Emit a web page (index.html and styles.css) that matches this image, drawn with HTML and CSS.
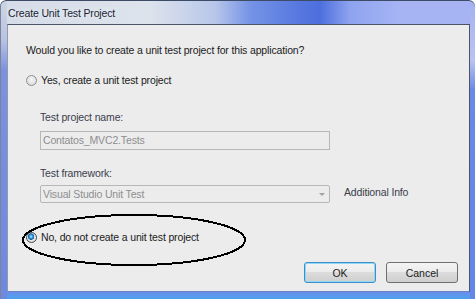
FILE: index.html
```html
<!DOCTYPE html>
<html lang="en">
<head>
    <meta charset="UTF-8">
    <meta name="viewport" content="width=device-width, initial-scale=1.0">
    <title>Create Unit Test Project</title>
    <link rel="stylesheet" href="styles.css">
</head>
<body>
    <div class="window">
        <div class="titlebar">Create Unit Test Project</div>
        <div class="client">
            <p class="question">Would you like to create a unit test project for this application?</p>
            <div class="option option-yes"><span class="radio"></span>Yes, create a unit test project</div>

            <div class="details">
                <div class="field-label first">Test project name:</div>
                <div class="textbox">Contatos_MVC2.Tests</div>
                <div class="field-label">Test framework:</div>
                <div class="combo-row">
                    <div class="combo"><span>Visual Studio Unit Test</span><span class="arrow"></span></div>
                    <span class="info">Additional Info</span>
                </div>
            </div>

            <div class="option option-no"><span class="radio checked"></span>No, do not create a unit test project</div>

            <div class="buttons">
                <button class="btn default">OK</button>
                <button class="btn">Cancel</button>
            </div>

            <!-- hand drawn marker around the chosen option -->
            <svg class="mark" width="226" height="54" viewBox="0 0 226 54">
                <ellipse cx="113" cy="27" rx="111" ry="25" fill="none" stroke="#000" stroke-width="2" shape-rendering="crispEdges"/>
            </svg>
        </div>
    </div>
</body>
</html>
```

FILE: styles.css
```css
body {
    margin: 0;
    font-family: "Liberation Sans", Arial, sans-serif;
    font-size: 10.5px;
    letter-spacing: -0.15px;
}
.window {
    width: 475px;
    height: 299px;
    box-sizing: border-box;
    padding: 0 5px 7px 7px;
    display: flex;
    flex-direction: column;
    border-radius: 6px 6px 0 0;
    box-shadow: inset 0 1px 0 #3d4c66, inset 1px 0 0 #7c8598;
    background:
        linear-gradient(to bottom, #cdd5e3 0, #b8c3e2 40px, #7c91de 70px, #6f88e0 100%) 0 0 / 7px 100% no-repeat,
        linear-gradient(to bottom, #a3b1f3 0, #bac4f1 60px, #6a88e6 90px, #6486e8 100%) 100% 0 / 5px 100% no-repeat,
        linear-gradient(to bottom, #6a8ee8, #4aa3ef) 0 100% / 100% 7px no-repeat,
        linear-gradient(to right, #d5dce8 0, #dde3ec 150px, #b8c6ea 215px, #7594e6 250px, #5677df 300px, #4d6fdd 320px, #8ea3ef 350px, #a6b4f4 400px, #a6b4f4 100%);
}
.titlebar {
    height: 24px;
    box-sizing: border-box;
    padding: 6px 0 0 1px;
    line-height: 14px;
    color: #1a2434;
    text-shadow: 0 0 6px #fff;
}
.client {
    flex: 1;
    position: relative;
    display: flex;
    flex-direction: column;
    padding: 18px 11px 8px 18px;
    background: #ececec;
    border: 1px solid #4b5366;
    border-left-color: #8f9bb5;
    border-bottom-color: #6a80c8;
    color: #1b1b1b;
}
.question {
    margin: 0;
    line-height: 14px;
}
.option {
    display: flex;
    align-items: center;
    height: 14px;
    line-height: 14px;
}
.option-yes {
    margin-top: 16px;
}
.option-no {
    margin-top: 27px;
}
.radio {
    width: 11px;
    height: 11px;
    box-sizing: border-box;
    margin-right: 4px;
    border: 1px solid #8d8f92;
    border-radius: 50%;
    background: radial-gradient(circle at 50% 40%, #f6f6f6 0, #e2e2e2 60%, #d2d2d2 100%);
}
.radio.checked {
    border-color: #3e4654;
    background: radial-gradient(circle at 45% 40%, #c9f1ff 0, #3aa2e4 1.5px, #165d9c 3px, #e8e8e8 3.5px, #d8d8d8 100%);
}
.details {
    margin-left: 14px;
    display: flex;
    flex-direction: column;
}
.field-label {
    margin-top: 16px;
    line-height: 14px;
    color: #3b3d4c;
}
.field-label.first {
    margin-top: 23px;
}
.textbox {
    margin-top: 7px;
    width: 290px;
    height: 19px;
    box-sizing: border-box;
    padding: 0 2px;
    border: 1px solid #b7b7b7;
    line-height: 17px;
    color: #8e8e8e;
}
.combo-row {
    display: flex;
    align-items: flex-start;
    margin-top: 5px;
}
.combo {
    width: 290px;
    height: 18px;
    box-sizing: border-box;
    display: flex;
    align-items: center;
    justify-content: space-between;
    padding: 0 4px 0 2px;
    border: 1px solid #b7b7b7;
    border-radius: 2px;
    line-height: 16px;
    color: #8e8e8e;
}
.arrow {
    width: 0;
    height: 0;
    border-left: 3px solid transparent;
    border-right: 3px solid transparent;
    border-top: 3px solid #a2a2a2;
}
.info {
    margin-left: 14px;
    line-height: 14px;
    color: #3b3d4c;
}
.buttons {
    display: flex;
    justify-content: flex-end;
    gap: 10px;
    margin-top: 18px;
}
.btn {
    width: 72px;
    height: 21px;
    padding: 0;
    font: inherit;
    color: #1b1b1b;
    border: 1px solid #707070;
    border-radius: 3px;
    background: linear-gradient(to bottom, #f4f4f4 0, #ebebeb 50%, #dcdcdc 50%, #cfcfcf 100%);
}
.btn.default {
    border-color: #3c8fc8;
    box-shadow: inset 0 0 0 1px #8fd8f6;
}
.mark {
    position: absolute;
    left: 13px;
    top: 188px;
}
```
